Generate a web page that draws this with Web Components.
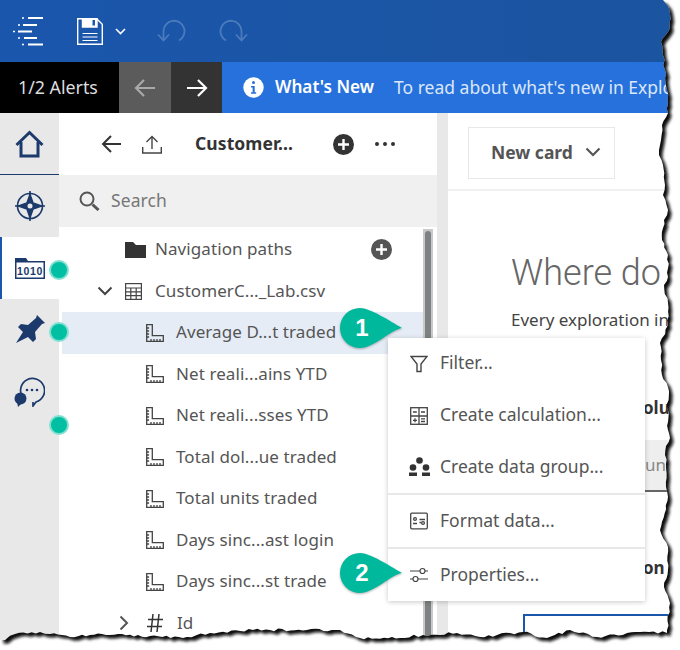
<!DOCTYPE html>
<html>
<head>
<meta charset="utf-8">
<title>Exploration</title>
<style>
    html,body{margin:0;padding:0;background:#fff;}
    body{font-family:"Noto Sans","Liberation Sans",sans-serif;}
</style>
</head>
<body>
<app-shell>
    <top-bar></top-bar>
    <alert-bar></alert-bar>
    <work-area>
        <side-rail></side-rail>
        <data-panel>
            <tree-row indent="35"><span slot="twist"></span><app-icon slot="icon" name="folder"></app-icon>Navigation paths<app-icon slot="end" name="plus"></app-icon></tree-row>
            <tree-row indent="35"><app-icon slot="twist" name="down"></app-icon><app-icon slot="icon" name="table"></app-icon>CustomerC..._Lab.csv</tree-row>
            <tree-row indent="84" selected><app-icon slot="icon" name="ruler"></app-icon>Average D...t traded</tree-row>
            <tree-row indent="84"><app-icon slot="icon" name="ruler"></app-icon>Net reali...ains YTD</tree-row>
            <tree-row indent="84"><app-icon slot="icon" name="ruler"></app-icon>Net reali...sses YTD</tree-row>
            <tree-row indent="84"><app-icon slot="icon" name="ruler"></app-icon>Total dol...ue traded</tree-row>
            <tree-row indent="84"><app-icon slot="icon" name="ruler"></app-icon>Total units traded</tree-row>
            <tree-row indent="84"><app-icon slot="icon" name="ruler"></app-icon>Days sinc...ast login</tree-row>
            <tree-row indent="84"><app-icon slot="icon" name="ruler"></app-icon>Days sinc...st trade</tree-row>
            <tree-row indent="57"><app-icon slot="twist" name="right"></app-icon><app-icon slot="icon" name="hash"></app-icon>Id</tree-row>
        </data-panel>
        <main-pane></main-pane>
    </work-area>
    <context-menu>
        <menu-item icon="filter">Filter...</menu-item>
        <menu-item icon="calc">Create calculation...</menu-item>
        <menu-item icon="group" divider>Create data group...</menu-item>
        <menu-item icon="format" divider>Format data...</menu-item>
        <menu-item icon="sliders">Properties...</menu-item>
    </context-menu>
    <step-callout style="top:308px">1</step-callout>
    <step-callout style="top:553px">2</step-callout>
    <torn-edge></torn-edge>
</app-shell>

<script>
const ICONS = {
    down: '<svg width="16" height="10" viewBox="0 0 16 10"><path d="M1.5 1.5L8 8l6.500-6.500" fill="none" stroke="#444" stroke-width="2"/></svg>',
    right: '<svg width="10" height="16" viewBox="0 0 10 16"><path d="M1.5 1.5L8 8l-6.500 6.500" fill="none" stroke="#555" stroke-width="2"/></svg>',
    folder: '<svg width="21" height="16" viewBox="0 0 21 16"><path d="M0 0h8l3 3h10v13H0z" fill="#333"/></svg>',
    plus: '<svg width="21" height="21" viewBox="0 0 21 21"><circle cx="10.500" cy="10.500" r="10.500" fill="#555"/><path d="M10.500 5v11M5 10.500h11" stroke="#fff" stroke-width="2.400"/></svg>',
    table: '<svg width="17" height="17" viewBox="0 0 17 17" fill="none" stroke="#444" stroke-width="1.200"><rect x=".6" y=".6" width="15.800" height="15.800"/><path d="M.6 5h15.800M.6 8.800h15.800M.6 12.600h15.800M5.800 5v11.400M11.200 5v11.400"/></svg>',
    ruler: '<svg width="18" height="18" viewBox="0 0 18 18" fill="none" stroke="#444" stroke-width="1.300"><path d="M.7.7h5.600v11h11v5.600H.7z"/><path d="M.7 4h2.400M.7 7h2.400M.7 10h2.400M.7 13h2.400M5 17.300v-2.200M8 17.300v-2.200M11 17.300v-2.200M14 17.300v-2.200"/></svg>',
    hash: '<svg width="16" height="20" viewBox="0 0 16 20" fill="none" stroke="#333" stroke-width="1.500"><path d="M6 1L4 19M12 1l-2 18M1 6.500h15M0 13.500h15"/></svg>',
    filter: '<svg width="18" height="18" viewBox="0 0 18 18" fill="none" stroke="#444" stroke-width="1.400"><path d="M1 1.500h16l-6 7.500v7.500H7V9z"/></svg>',
    calc: '<svg width="18" height="18" viewBox="0 0 18 18" fill="none" stroke="#444" stroke-width="1.300"><rect x=".7" y=".7" width="16.600" height="16.600"/><path d="M9 .7v16.600M.7 9h16.600M3 5h3.800M11 5h4M11 11.800h4M11 14.500h4M3 13.300h4M5 11.300v4"/></svg>',
    group: '<svg width="21" height="20" viewBox="0 0 21 20" fill="#333"><circle cx="10.500" cy="3.500" r="3.300"/><circle cx="4" cy="10.500" r="3.300"/><circle cx="17" cy="10.500" r="3.300"/><rect x="0" y="15.500" width="8" height="3.500"/><rect x="13" y="15.500" width="8" height="3.500"/></svg>',
    format: '<svg width="18" height="18" viewBox="0 0 18 18" fill="none" stroke="#444" stroke-width="1.300"><rect x=".7" y="1.200" width="16.600" height="15.600" rx="1"/><circle cx="5" cy="7" r="1.400"/><path d="M3 11.500h4M9.500 7.500h5.500M9.500 10.500h1.500"/><circle cx="13" cy="11" r="1.400"/></svg>',
    sliders: '<svg width="20" height="16" viewBox="0 0 20 16" fill="none" stroke="#444" stroke-width="1.200"><path d="M1 4h10M16 4h3M1 12h3M9 12h10"/><circle cx="13.500" cy="4" r="2.500"/><circle cx="6.500" cy="12" r="2.500"/></svg>'
};

// small icon holder, the drawing comes from the name attribute
class AppIcon extends HTMLElement{
    constructor(){
        super();
        this.attachShadow({mode: 'open'});
    }
    connectedCallback(){
        this.shadowRoot.innerHTML = `<style>:host{display:inline-flex;align-items:center;}</style>${ICONS[this.getAttribute('name')]}`;
    }
}

class AppShell extends HTMLElement{
    constructor(){
        super();
        this.attachShadow({mode: 'open'}).innerHTML = `
            <style>
                :host{
                    display:flex;
                    flex-direction:column;
                    position:relative;
                    width:680px;
                    height:650px;
                    overflow:hidden;
                    background:#fff;
                }
            </style>
            <slot></slot>`;
    }
}

class TopBar extends HTMLElement{
    constructor(){
        super();
        this.attachShadow({mode: 'open'}).innerHTML = `
            <style>
                :host{
                    display:flex;
                    align-items:center;
                    flex:none;
                    height:62px;
                    padding-left:13px;
                    background:linear-gradient(90deg,#1a56ac,#1b549f);
                }
                svg{display:block;flex:none;}
                .logo{margin-right:33px;}
                .save{margin-right:12px;}
                .caret{margin-right:31px;}
                .undo{margin-right:33px;}
            </style>
            <svg class="logo" width="31" height="30" viewBox="0 0 31 30" fill="none" stroke="#fff" stroke-width="2">
                <path d="M15 2h15M10 9h14M5 15.500h14M11 22h13M15 28.500h15"/>
                <path d="M9 2h2M5 9h2M0 15.500h2M5 22h2M9 28.500h2" stroke-width="1.600"/>
            </svg>
            <svg class="save" width="26" height="27" viewBox="0 0 26 27" fill="none" stroke="#fff" stroke-width="1.400">
                <path d="M.7.7h19l5.600 5.600v20H.7z"/>
                <path d="M5.500.7h14.500v8.300H5.500z" fill="#fff"/>
                <path d="M15.500 2v5.500h2.500V2z" fill="#1a56ac" stroke="none"/>
                <path d="M5.500 15.500h15M5.500 19h15M5.500 22.500h15" stroke-width="1.200"/>
            </svg>
            <svg class="caret" width="11" height="7" viewBox="0 0 11 7"><path d="M1 1l4.500 4.500L10 1" fill="none" stroke="#fff" stroke-width="1.600"/></svg>
            <svg class="undo" width="29" height="24" viewBox="0 0 29 24" fill="none" stroke="#4d7cbd" stroke-width="1.800">
                <path d="M22 21.500A10.500 10.500 0 1 0 6.500 12v9"/><path d="M1 15.500l5.500 6 5.500-6"/>
            </svg>
            <svg width="29" height="24" viewBox="0 0 29 24" fill="none" stroke="#4d7cbd" stroke-width="1.800">
                <path d="M7 21.500A10.500 10.500 0 1 1 22.500 12v9"/><path d="M28 15.500l-5.500 6-5.500-6"/>
            </svg>`;
    }
}

class AlertBar extends HTMLElement{
    constructor(){
        super();
        this.attachShadow({mode: 'open'}).innerHTML = `
            <style>
                :host{
                    display:flex;
                    flex:none;
                    height:51px;
                    color:#fff;
                    font:17.500px "Noto Sans",sans-serif;
                    white-space:nowrap;
                    overflow:hidden;
                }
                div{display:flex;align-items:center;flex:none;box-sizing:border-box;}
                .count{width:119px;padding:0 0 2px 18px;background:#000;color:#ddd;font-size:17.800px;}
                .nav{width:52px;justify-content:center;background:#5b5b5b;}
                .nav.on{width:51px;background:#333;}
                .news{flex:1;background:#2771dc;padding-left:21px;color:#dbe7fa;}
                .news span{padding-bottom:2px;}
                b{margin:0 20px 0 11px;padding-bottom:2px;color:#fff;font-weight:600;font-size:17.200px;}
            </style>
            <div class="count">1/2 Alerts</div>
            <div class="nav"><svg width="22" height="18" viewBox="0 0 22 18" fill="none" stroke="#a9a9a9" stroke-width="2.200"><path d="M21 9H2M10 1L2 9l8 8"/></svg></div>
            <div class="nav on"><svg width="22" height="18" viewBox="0 0 22 18" fill="none" stroke="#fff" stroke-width="2.200"><path d="M1 9h19M12 1l8 8-8 8"/></svg></div>
            <div class="news">
                <svg width="21" height="21" viewBox="0 0 21 21"><circle cx="10.500" cy="10.500" r="10.200" fill="#fff"/><circle cx="10.500" cy="5.600" r="1.500" fill="#2771dc"/><path d="M8 9h3.700v6.200h1.500v1.500H8v-1.500h1.600v-4.700H8z" fill="#2771dc"/></svg>
                <b>What's New</b><span>To read about what's new in Exploration</span>
            </div>`;
    }
}

class WorkArea extends HTMLElement{
    constructor(){
        super();
        this.attachShadow({mode: 'open'}).innerHTML = `
            <style>:host{display:flex;flex:1;min-height:0;}</style>
            <slot></slot>`;
    }
}

class SideRail extends HTMLElement{
    constructor(){
        super();
        this.attachShadow({mode: 'open'}).innerHTML = `
            <style>
                :host{
                    display:flex;
                    flex-direction:column;
                    position:relative;
                    z-index:1;
                    flex:none;
                    width:59px;
                    background:#e8e8e8;
                }
                .cell{display:flex;align-items:center;justify-content:center;box-sizing:border-box;height:62px;flex:none;}
                .home{border-bottom:1px solid #1c3a6b;}
                .active{background:#fff;border-left:2px solid #1a56ac;padding-right:2px;}
                svg{display:block;}
                .dot{
                    position:absolute;
                    left:49px;
                    width:20px;
                    height:20px;
                    border-radius:50%;
                    background:#00bfa3;
                    box-sizing:border-box;
                    border:2px solid #7fe0d0;
                    box-shadow:inset 0 0 0 2px #00bfa3;
                }
            </style>
            <div class="cell home">
                <svg width="29" height="28" viewBox="0 0 29 28" fill="none" stroke="#1c3a6b" stroke-width="3"><path d="M1.500 15L14.500 2.500l13 12.500"/><path d="M6 12v14h17V12"/></svg>
            </div>
            <div class="cell">
                <svg width="30" height="30" viewBox="0 0 30 30" fill="none" stroke="#1c3a6b" stroke-width="1.600"><circle cx="15" cy="15" r="12.500"/><path d="M15 0v4M15 26v4M0 15h4M26 15h4"/><path d="M15 3.500l3 8.500 8.500 3-8.500 3-3 8.500-3-8.500L3.500 15l8.500-3z" fill="#1c3a6b"/><circle cx="15" cy="15" r="2.500" fill="#e8e8e8" stroke="none"/></svg>
            </div>
            <div class="cell active">
                <svg width="30" height="21" viewBox="0 0 30 21"><path d="M0 0h11l2 3h17v18H0z" fill="#1c3a6b"/><rect x="1.500" y="4.500" width="27" height="15" fill="#fff"/><text x="15" y="16.500" text-anchor="middle" font-family="Liberation Sans,sans-serif" font-weight="700" font-size="10.500" fill="#1c3a6b" letter-spacing=".6">1010</text></svg>
            </div>
            <div class="cell">
                <svg width="30" height="30" viewBox="0 0 30 30" fill="#1c3a6b"><path d="M1 28L8 17 3 12 6 9 13 10 21 3 22 0 30 8 27 9 20 17 21 24 18 27 13 22Z"/></svg>
            </div>
            <div class="cell">
                <svg width="31" height="30" viewBox="0 0 31 30"><path d="M8.500 20A12 12 0 1 1 22 25L19 29V25" fill="none" stroke="#1c3a6b" stroke-width="1.700"/><circle cx="6.500" cy="21.500" r="6" fill="#1c3a6b"/><path d="M3 25l1 5 4-4z" fill="#1c3a6b"/><circle cx="13" cy="13" r="1.300" fill="#1c3a6b"/><circle cx="18" cy="13" r="1.300" fill="#1c3a6b"/><circle cx="23" cy="13" r="1.300" fill="#1c3a6b"/></svg>
            </div>
            <span class="dot" style="top:147px"></span>
            <span class="dot" style="top:209px"></span>
            <span class="dot" style="top:302px"></span>`;
    }
}

class DataPanel extends HTMLElement{
    constructor(){
        super();
        this.attachShadow({mode: 'open'}).innerHTML = `
            <style>
                :host{
                    display:flex;
                    flex-direction:column;
                    flex:none;
                    width:378px;
                    color:#555;
                    font:17px "Noto Sans",sans-serif;
                    letter-spacing:.08px;
                }
                .head{
                    display:flex;
                    align-items:center;
                    flex:none;
                    height:62px;
                    box-sizing:border-box;
                    padding-left:42px;
                }
                .head svg{display:block;flex:none;}
                .title{width:138px;margin-left:33px;padding-bottom:2px;font-weight:700;font-size:17.500px;color:#333;white-space:nowrap;}
                .search{
                    display:flex;
                    align-items:center;
                    flex:none;
                    height:52px;
                    padding-left:20px;
                    background:#f0f0f0;
                    color:#777;
                    font-size:17.500px;
                }
                .search svg{margin-right:11px;}
                .search span{padding-bottom:2px;}
                .body{display:flex;flex:1;min-height:0;padding-top:2px;}
                .rows{flex:1;min-width:0;padding-left:3px;overflow:hidden;}
                .bar{flex:none;width:10px;margin-right:4px;background:#c9c9c9;display:flex;justify-content:center;padding-top:2px;box-sizing:border-box;}
                .bar i{display:block;width:6px;height:100%;background:#7f8282;border-radius:3px 3px 0 0;}
            </style>
            <div class="head">
                <svg width="20" height="18" viewBox="0 0 20 18" fill="none" stroke="#333" stroke-width="2"><path d="M20 9H2M10 1L2 9l8 8"/></svg>
                <svg style="margin-left:21px" width="20" height="19" viewBox="0 0 20 19" fill="none" stroke="#444" stroke-width="1.400"><path d="M.7 12v6h18.600v-6M10 14V1.500M4.500 7L10 1.500 15.500 7"/></svg>
                <span class="title">Customer...</span>
                <svg width="21" height="21" viewBox="0 0 21 21"><circle cx="10.500" cy="10.500" r="10.500" fill="#333"/><path d="M10.500 5v11M5 10.500h11" stroke="#fff" stroke-width="2.400"/></svg>
                <svg style="margin-left:21px" width="20" height="4" viewBox="0 0 20 4" fill="#333"><circle cx="2" cy="2" r="2"/><circle cx="10" cy="2" r="2"/><circle cx="18" cy="2" r="2"/></svg>
            </div>
            <div class="search">
                <svg width="21" height="20" viewBox="0 0 21 20" fill="none" stroke="#555"><circle cx="8" cy="8" r="6.500" stroke-width="2"/><path d="M13.500 13.500l6 5.500" stroke-width="3"/></svg>
                <span>Search</span>
            </div>
            <div class="body">
                <div class="rows"><slot></slot></div>
                <div class="bar"><i></i></div>
            </div>`;
    }
}

class TreeRow extends HTMLElement{
    constructor(){
        super();
        this.attachShadow({mode: 'open'}).innerHTML = `
            <style>
                :host{
                    display:flex;
                    align-items:center;
                    height:41.500px;
                    white-space:nowrap;
                }
                :host([selected]){background:#e5ecf5;}
                ::slotted([slot="twist"]){width:28px;flex:none;}
                ::slotted([slot="icon"]){width:30px;flex:none;}
                ::slotted([slot="end"]){margin-left:auto;margin-right:31px;}
                .label{padding-bottom:2px;}
            </style>
            <slot name="twist"></slot>
            <slot name="icon"></slot>
            <span class="label"><slot></slot></span>
            <slot name="end"></slot>`;
    }
    connectedCallback(){
        this.style.paddingLeft = this.getAttribute('indent') + 'px';
    }
}

class MainPane extends HTMLElement{
    constructor(){
        super();
        this.attachShadow({mode: 'open'}).innerHTML = `
            <style>
                :host{
                    display:flex;
                    flex-direction:column;
                    flex:1;
                    min-width:0;
                    border-left:11px solid #e8e8e8;
                    color:#444;
                    font:17px/24px "Noto Sans",sans-serif;
                    white-space:nowrap;
                    overflow:hidden;
                }
                .tools{flex:none;height:78px;box-sizing:border-box;padding:14px 0 0 20px;border-bottom:2px solid #f0f0f0;}
                .new{
                    display:inline-flex;
                    align-items:center;
                    box-sizing:border-box;
                    width:147px;
                    height:52px;
                    padding:0 0 2px 22px;
                    border:1px solid #e8e8e8;
                    color:#555;
                    font-weight:700;
                    font-size:17.500px;
                }
                .new svg{margin-left:12px;}
                h1{margin:52px 0 0 63px;font:300 36px/60px Roboto,sans-serif;color:#666;}
                .line{margin:5px 0 0 63px;}
                .frag{margin-top:64px;padding-left:195px;font-weight:700;color:#333;}
                .band{
                    margin-top:20px;
                    height:50px;
                    padding-left:197px;
                    line-height:50px;
                    background:#eee;
                    border-bottom:2px solid #666;
                    color:#888;
                    flex:none;
                }
                .frame{flex:none;margin:34px 0 0 75px;height:60px;border:2px solid #1a56ac;border-right:0;}
            </style>
            <div class="tools">
                <span class="new">New card<svg width="16" height="10" viewBox="0 0 16 10"><path d="M1.500 1.500L8 8l6.500-6.500" fill="none" stroke="#555" stroke-width="2.200"/></svg></span>
            </div>
            <h1>Where do</h1>
            <div class="line">Every exploration in</div>
            <div class="frag">olu</div>
            <div class="band">un</div>
            <div class="frag">on</div>
            <div class="frame"></div>`;
    }
}

class ContextMenu extends HTMLElement{
    constructor(){
        super();
        this.attachShadow({mode: 'open'}).innerHTML = `
            <style>
                :host{
                    display:flex;
                    flex-direction:column;
                    position:absolute;
                    left:388px;
                    top:338px;
                    width:257px;
                    height:263px;
                    background:#fff;
                    box-shadow:0 1px 5px rgba(0,0,0,.22);
                    color:#555;
                    font:17.500px "Noto Sans",sans-serif;
                }
            </style>
            <slot></slot>`;
    }
}

class MenuItem extends HTMLElement{
    constructor(){
        super();
        this.attachShadow({mode: 'open'}).innerHTML = `
            <style>
                :host{
                    display:flex;
                    align-items:center;
                    flex:1;
                    box-sizing:border-box;
                    white-space:nowrap;
                }
                :host([divider]){border-bottom:2px solid #e8e8e8;}
                .ic{display:flex;justify-content:center;align-items:center;width:22px;margin:0 10px 0 20px;}
                .label{padding-bottom:3px;}
            </style>
            <span class="ic"></span><span class="label"><slot></slot></span>`;
    }
    connectedCallback(){
        this.shadowRoot.querySelector('.ic').innerHTML = ICONS[this.getAttribute('icon')];
    }
}

class StepCallout extends HTMLElement{
    constructor(){
        super();
        this.attachShadow({mode: 'open'}).innerHTML = `
            <style>
                :host{
                    display:flex;
                    align-items:center;
                    position:absolute;
                    left:340px;
                    width:62px;
                    height:40px;
                    color:#fff;
                    font:700 24px "Liberation Sans",sans-serif;
                }
                svg{position:absolute;left:0;top:0;filter:drop-shadow(0 1px 1px rgba(0,0,0,.3));}
                span{position:relative;width:44px;text-align:center;}
            </style>
            <svg width="62" height="40" viewBox="0 0 62 40"><path d="M20 0C30 0 50 13 62 20 52 21 34 40 20 40A20 20 0 0 1 20 0Z" fill="#00b89c"/></svg>
            <span><slot></slot></span>`;
    }
}

// the torn paper border, white outside of the page outline with a shadow on it
class TornEdge extends HTMLElement{
    constructor(){
        super();
        this.attachShadow({mode: 'open'});
    }
    connectedCallback(){
        const right = [[663,0],[668,6],[670,14],[670,28],[661,42],[663,55],[665,70],[667,90],[668,113],[662,125],[661,140],[659,155],[663,165],[665,185],[663,195],[668,210],[664,220],[662,240],[668,255],[668,277],[664,285],[668,303],[668,325],[660,343],[661,360],[662,375],[668,387],[668,430],[670,438],[666,446],[666,464],[666,487],[668,497],[660,530],[668,547],[668,570],[664,587],[670,603],[667,630]];
        const bottom = [[667,633],[640,632],[597,637],[570,630],[547,638],[523,632],[480,637],[457,633],[423,635],[400,638],[360,638],[340,630],[307,630],[270,630],[253,630],[210,633],[187,637],[150,636],[110,635],[90,635],[70,637],[50,634],[40,632],[15,634],[5,640],[0,640]];
        let seed = 7;
        const rnd = () => { seed = (seed * 16807) % 2147483647; return (seed % 1000) / 1000 - .5; };
        const pts = [];
        const all = right.concat(bottom);
        all.forEach((p, i) => {
            pts.push(p);
            const q = all[i + 1];
            if(!q) return;
            const len = Math.hypot(q[0] - p[0], q[1] - p[1]);
            const steps = Math.floor(len / 4);
            for(let s = 1; s < steps; s++){
                const t = s / steps;
                pts.push([
                    +(p[0] + (q[0] - p[0]) * t + (i < right.length ? rnd() * 2.500 : 0)).toFixed(1),
                    +(p[1] + (q[1] - p[1]) * t + (i < right.length ? 0 : rnd() * 3)).toFixed(1)
                ]);
            }
        });
        const page = 'M0 0L' + pts.map(p => p.join(' ')).join('L') + 'Z';
        const outside = 'M-10 -10H690V660H-10Z' + page;
        this.shadowRoot.innerHTML = `
            <style>
                :host{position:absolute;z-index:2;left:0;top:0;width:680px;height:650px;pointer-events:none;}
                svg{display:block;}
            </style>
            <svg width="680" height="650" viewBox="0 0 680 650">
                <defs>
                    <clipPath id="out"><path d="${outside}" clip-rule="evenodd"/></clipPath>
                    <filter id="soft" x="-5%" y="-5%" width="110%" height="110%"><feGaussianBlur stdDeviation="1.700"/></filter>
                </defs>
                <path d="${outside}" fill="#fff" fill-rule="evenodd"/>
                <g clip-path="url(#out)"><path d="${page}" transform="translate(3.500 3.500)" fill="#0c0c0c" filter="url(#soft)"/></g>
            </svg>`;
    }
}

customElements.define('app-icon', AppIcon);
customElements.define('app-shell', AppShell);
customElements.define('top-bar', TopBar);
customElements.define('alert-bar', AlertBar);
customElements.define('work-area', WorkArea);
customElements.define('side-rail', SideRail);
customElements.define('data-panel', DataPanel);
customElements.define('tree-row', TreeRow);
customElements.define('main-pane', MainPane);
customElements.define('context-menu', ContextMenu);
customElements.define('menu-item', MenuItem);
customElements.define('step-callout', StepCallout);
customElements.define('torn-edge', TornEdge);
</script>
</body>
</html>
